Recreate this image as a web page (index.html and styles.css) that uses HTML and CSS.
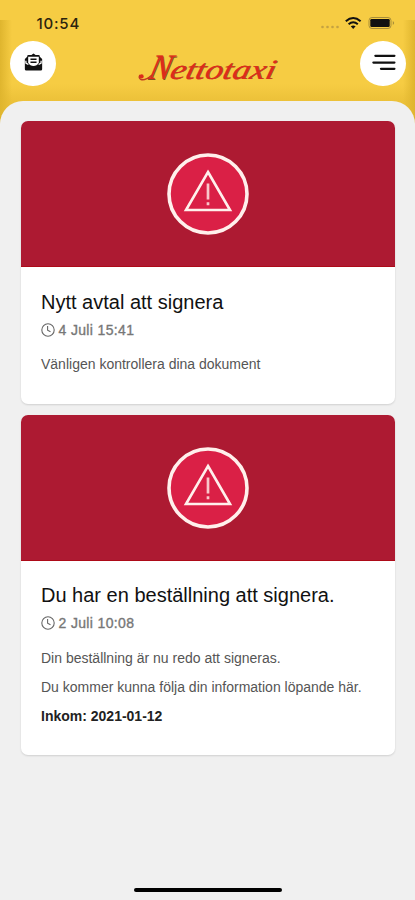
FILE: index.html
```html
<!DOCTYPE html>
<html lang="sv">
<head>
<meta charset="utf-8">
<meta name="viewport" content="width=device-width, initial-scale=1">
<title>Nettotaxi</title>
<link rel="stylesheet" href="styles.css">
</head>
<body>
<div class="app">
  <header class="header">
    <div class="status">
      <span class="time">10:54</span>
      <svg class="status-icons" width="78" height="16" viewBox="0 0 78 16">
        <g fill="#c4a241"><circle cx="3.5" cy="12" r="1.3"/><circle cx="8.5" cy="12" r="1.3"/><circle cx="13.5" cy="12" r="1.3"/><circle cx="18.5" cy="12" r="1.3"/></g>
        <g fill="none" stroke="#111" stroke-width="2"><path d="M26.8 6.2Q34.2 -.2 41.6 6.2"/><path d="M29.6 9.2Q34.2 5.2 38.8 9.2"/></g>
        <path d="M31.8 11.3Q34.2 9.5 36.6 11.3L34.2 14Z" fill="#111"/>
        <rect x="50" y="2.5" width="22" height="11" rx="3" fill="none" stroke="#a88e39"/>
        <rect x="51.3" y="4" width="19.4" height="8" rx="1.3" fill="#111"/>
        <path d="M73.8 6Q76.5 8 73.8 10Z" fill="#a88e39"/>
      </svg>
    </div>
    <div class="toolbar">
      <button class="round" aria-label="Meddelanden">
        <svg class="mail" width="19" height="19" viewBox="0 0 20 20">
          <path d="M.9 6.2 3.4 4V3.2Q3.4 2 4.8 2H7.8L10 .6 12.2 2H15.2Q16.6 2 16.6 3.2V4L19.1 6.2V17Q19.1 18.5 17.6 18.5H2.4Q.9 18.5.9 17Z" fill="#111"/>
          <path d="M4.4 4H15.6V10.2Q13.5 13.6 10 13.6T4.4 10.2Z" fill="#fff"/>
          <path d="M2 8.2V10.6L4.6 12.2M18 8.2V10.6L15.4 12.2" stroke="#fff" stroke-width="1.3" fill="none"/>
          <path d="M6.8 6.6H13.2M6.8 9.8H13.2" stroke="#111" stroke-width="1.5"/>
        </svg>
      </button>
      <svg class="logo" width="146" height="40" viewBox="0 0 146 40">
        <g class="logo-shade" transform="translate(.7 .5) skewX(-14)"><text class="logo-cap" x="19.5" y="29" textLength="22" lengthAdjust="spacingAndGlyphs">N</text><text class="logo-rest" x="41" y="29" textLength="105" lengthAdjust="spacingAndGlyphs">ettotaxi</text></g>
        <g class="logo-face" transform="skewX(-14)"><text class="logo-cap" x="19.5" y="29" textLength="22" lengthAdjust="spacingAndGlyphs">N</text><text class="logo-rest" x="41" y="29" textLength="105" lengthAdjust="spacingAndGlyphs">ettotaxi</text></g>
        <path d="M17 25Q10 31 6 29.5Q3 28 5 25" fill="none" stroke="#c23a20" stroke-width="1.4"/><circle cx="6.6" cy="26.4" r="2.1" fill="#dc2c1b"/>
      </svg>
      <button class="round" aria-label="Meny">
        <svg class="menu" width="24" height="18" viewBox="0 0 24 18"><path d="M4.4 2.8H23.4M2.4 9.6H23.4M10 15.8H23.4" stroke="#111" stroke-width="2.3" stroke-linecap="round"/></svg>
      </button>
    </div>
  </header>

  <main class="panel">
    <article class="card">
      <div class="banner">
        <svg width="82" height="82" viewBox="0 0 82 82"><circle cx="41" cy="41" r="39" fill="#da2046" stroke="#fff0ec" stroke-width="3.6"/><path d="M41 19 63 57H19Z" fill="none" stroke="#fff0ec" stroke-width="2.6"/><path d="M41 30.5V46.5M41 49.2V52.2" stroke="#f9c7ca" stroke-width="2.7"/></svg>
      </div>
      <div class="content">
        <h2>Nytt avtal att signera</h2>
        <div class="meta"><svg width="14" height="14" viewBox="0 0 14 14"><circle cx="7" cy="7" r="6.2"/><path d="M6.6 3V7.2L9.5 8.8"/></svg><span>4 Juli 15:41</span></div>
        <p>Vänligen kontrollera dina dokument</p>
      </div>
    </article>
    <article class="card">
      <div class="banner">
        <svg width="82" height="82" viewBox="0 0 82 82"><circle cx="41" cy="41" r="39" fill="#da2046" stroke="#fff0ec" stroke-width="3.6"/><path d="M41 19 63 57H19Z" fill="none" stroke="#fff0ec" stroke-width="2.6"/><path d="M41 30.5V46.5M41 49.2V52.2" stroke="#f9c7ca" stroke-width="2.7"/></svg>
      </div>
      <div class="content">
        <h2>Du har en beställning att signera.</h2>
        <div class="meta"><svg width="14" height="14" viewBox="0 0 14 14"><circle cx="7" cy="7" r="6.2"/><path d="M6.6 3V7.2L9.5 8.8"/></svg><span>2 Juli 10:08</span></div>
        <p>Din beställning är nu redo att signeras.</p>
        <p>Du kommer kunna följa din information löpande här.</p>
        <p class="strong">Inkom: 2021-01-12</p>
      </div>
    </article>
    <div class="home-bar"></div>
  </main>
</div>
</body>
</html>
```
FILE: styles.css
```css
* { box-sizing: border-box; }
body { margin: 0; font-family: "Liberation Sans", Arial, sans-serif; }
.app {
  height: 900px;
  display: flex;
  flex-direction: column;
  overflow: hidden;
  background:
    linear-gradient(90deg, #dfb52e 0, #f1c63c00 12px) 0 20px / 100% 110px no-repeat,
    linear-gradient(270deg, #dfb52e 0, #f1c63c00 12px) 0 20px / 100% 110px no-repeat,
    linear-gradient(#f6cc43 0, #f6cc43 84px, #ecc139 101px);
}
.header { height: 101px; flex: none; }
.status {
  height: 40px;
  padding: 15px 18px 0 36.5px;
  display: flex;
  justify-content: space-between;
  align-items: flex-start;
}
.time { font: 500 15px/17px Inter, sans-serif; letter-spacing: .8px; color: #2b240e; }
.toolbar { display: flex; justify-content: space-between; padding: .5px 9px 0 10px; }
.round {
  width: 46px;
  height: 45.5px;
  border: 0;
  border-radius: 50%;
  padding: 0;
  background: #fff;
  display: grid;
  place-items: center;
}
.mail { margin-bottom: 1px; }
.menu { margin-bottom: 2px; overflow: visible; }
.logo { margin-top: 9px; overflow: visible; font-family: "Liberation Serif", serif; font-style: italic; }
.logo-cap { font-size: 36px; }
.logo-rest { font-size: 28px; }
.logo-shade { fill: #7d5420; }
.logo-face { fill: #dc2c1b; stroke: #dc2c1b; stroke-width: .2px; }
.panel {
  flex: 1;
  display: flex;
  flex-direction: column;
  background: #f0f0f0;
  border-radius: 23px 23px 0 0;
  padding: 20px 20px 8px 21px;
}
.card {
  background: #fff;
  border-radius: 7px;
  overflow: hidden;
  box-shadow: 0 1px 2px #0002;
  margin-bottom: 11px;
}
.banner {
  height: 146px;
  background: #ad1a32;
  border-bottom: 1px solid #ad0a18;
  display: grid;
  place-items: center;
}
.content { padding: 21px 20px 30px; }
.card:first-child .content { padding: 22px 20px 30px; }
h2 { margin: 0; font-size: 20px; font-weight: 400; line-height: 26px; color: #111; white-space: nowrap; }
.meta { display: flex; align-items: center; gap: 3.5px; height: 16px; margin: 7px 0 16px; font-size: 14px; letter-spacing: .35px; color: #777; -webkit-text-stroke: .35px #777; }
.card + .card .meta { margin-bottom: 17px; }
.meta svg { fill: none; stroke: #666; stroke-width: 1.1; }
p { margin: 0 0 9px; font-size: 14px; line-height: 20px; color: #555; white-space: nowrap; }
p:last-child { margin-bottom: 0; }
.card + .card p:last-child { margin-bottom: -1px; }
.strong { font-weight: 700; color: #222; }
.home-bar { width: 148px; height: 4px; border-radius: 2px; background: #000; margin: auto auto 0; }
```
